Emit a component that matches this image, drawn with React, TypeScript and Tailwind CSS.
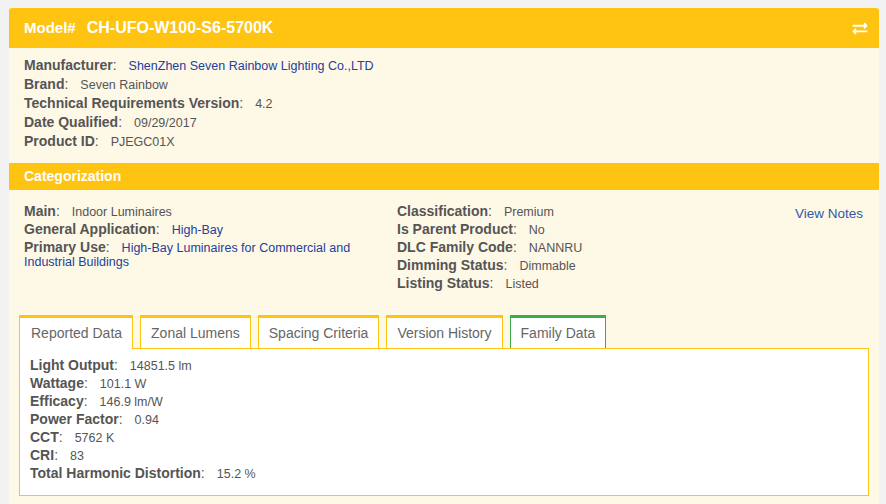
import { FaExchangeAlt } from "react-icons/fa";

type Field = { label: string; value: string; link?: boolean };

const general: Field[] = [
  { label: "Manufacturer", value: "ShenZhen Seven Rainbow Lighting Co.,LTD", link: true },
  { label: "Brand", value: "Seven Rainbow" },
  { label: "Technical Requirements Version", value: "4.2" },
  { label: "Date Qualified", value: "09/29/2017" },
  { label: "Product ID", value: "PJEGC01X" },
];

const catLeft: Field[] = [
  { label: "Main", value: "Indoor Luminaires" },
  { label: "General Application", value: "High-Bay", link: true },
  { label: "Primary Use", value: "High-Bay Luminaires for Commercial and Industrial Buildings", link: true },
];

const catRight: Field[] = [
  { label: "Classification", value: "Premium" },
  { label: "Is Parent Product", value: "No" },
  { label: "DLC Family Code", value: "NANNRU" },
  { label: "Dimming Status", value: "Dimmable" },
  { label: "Listing Status", value: "Listed" },
];

const reported: Field[] = [
  { label: "Light Output", value: "14851.5 lm" },
  { label: "Wattage", value: "101.1 W" },
  { label: "Efficacy", value: "146.9 lm/W" },
  { label: "Power Factor", value: "0.94" },
  { label: "CCT", value: "5762 K" },
  { label: "CRI", value: "83" },
  { label: "Total Harmonic Distortion", value: "15.2 %" },
];

const tabs = ["Reported Data", "Zonal Lumens", "Spacing Criteria", "Version History", "Family Data"];

function Row({ field, lh = "leading-[19px]" }: { field: Field; lh?: string }) {
  return (
    <p className={`${lh} text-[14px] text-[#555]`}>
      <span className="font-bold">{field.label}</span>
      <span>:</span>
      <span
        className={`ml-[12px] text-[12.5px] leading-[10px] ${field.link ? "text-[#23409a]" : "text-[#555]"}`}
      >
        {field.value}
      </span>
    </p>
  );
}

export default function App() {
  return (
    <div
      className="min-h-screen bg-[#f2f2f2] pl-[9px] pt-2"
      style={{ fontFamily: '"Liberation Sans", Arial, sans-serif' }}
    >
      <div className="w-[870px] overflow-hidden rounded-t-[3px] bg-[#fef8e7] pb-6">
        <div className="flex h-10 items-center justify-between bg-[#ffc312] pl-[15px] pr-[10px] text-white">
          <h1 className="flex items-baseline font-bold">
            <span className="text-[15px]">Model#</span>
            <span className="ml-[11px] text-[16px]">CH-UFO-W100-S6-5700K</span>
          </h1>
          <FaExchangeAlt className="h-[15px] w-[18px]" />
        </div>

        <div className="px-[15px] pb-[12px] pt-[8px]">
          {general.map((f) => (
            <Row key={f.label} field={f} />
          ))}
        </div>

        <div className="flex h-[27px] items-center bg-[#ffc312] px-[15px] text-[14px] font-bold text-white">
          Categorization
        </div>

        <div className="grid grid-cols-[373px_1fr_auto] pl-[15px] pr-[16px] pt-[14px]">
          <div className="flex flex-col gap-1 pr-4">
            {catLeft.map((f) => (
              <Row key={f.label} field={f} lh="leading-[14px]" />
            ))}
          </div>
          <div className="flex flex-col gap-1">
            {catRight.map((f) => (
              <Row key={f.label} field={f} lh="leading-[14px]" />
            ))}
          </div>
          <a className="pt-[3px] text-[13.5px] leading-[14px] text-[#2e5aa8]">View Notes</a>
        </div>

        <div className="mx-[10px] mt-[25px]">
          <div className="flex gap-[7px]">
            {tabs.map((t, i) => (
              <div
                key={t}
                className={`relative flex h-[33px] items-center border-x border-t-[3px] bg-white px-[10px] text-[14px] text-[#666] ${
                  i === 4 ? "border-[#3aae4a]" : "border-[#ffc312]"
                } ${i === 0 ? "z-10 -mb-px h-[34px] pl-[11px] pr-[10px]" : ""}`}
              >
                {t}
              </div>
            ))}
          </div>
          <div className="h-[148px] border border-[#ffc312] bg-white px-[10px] pt-[9px]">
            <div className="flex flex-col gap-1">
              {reported.map((f) => (
                <Row key={f.label} field={f} lh="leading-[14px]" />
              ))}
            </div>
          </div>
        </div>
      </div>
    </div>
  );
}
